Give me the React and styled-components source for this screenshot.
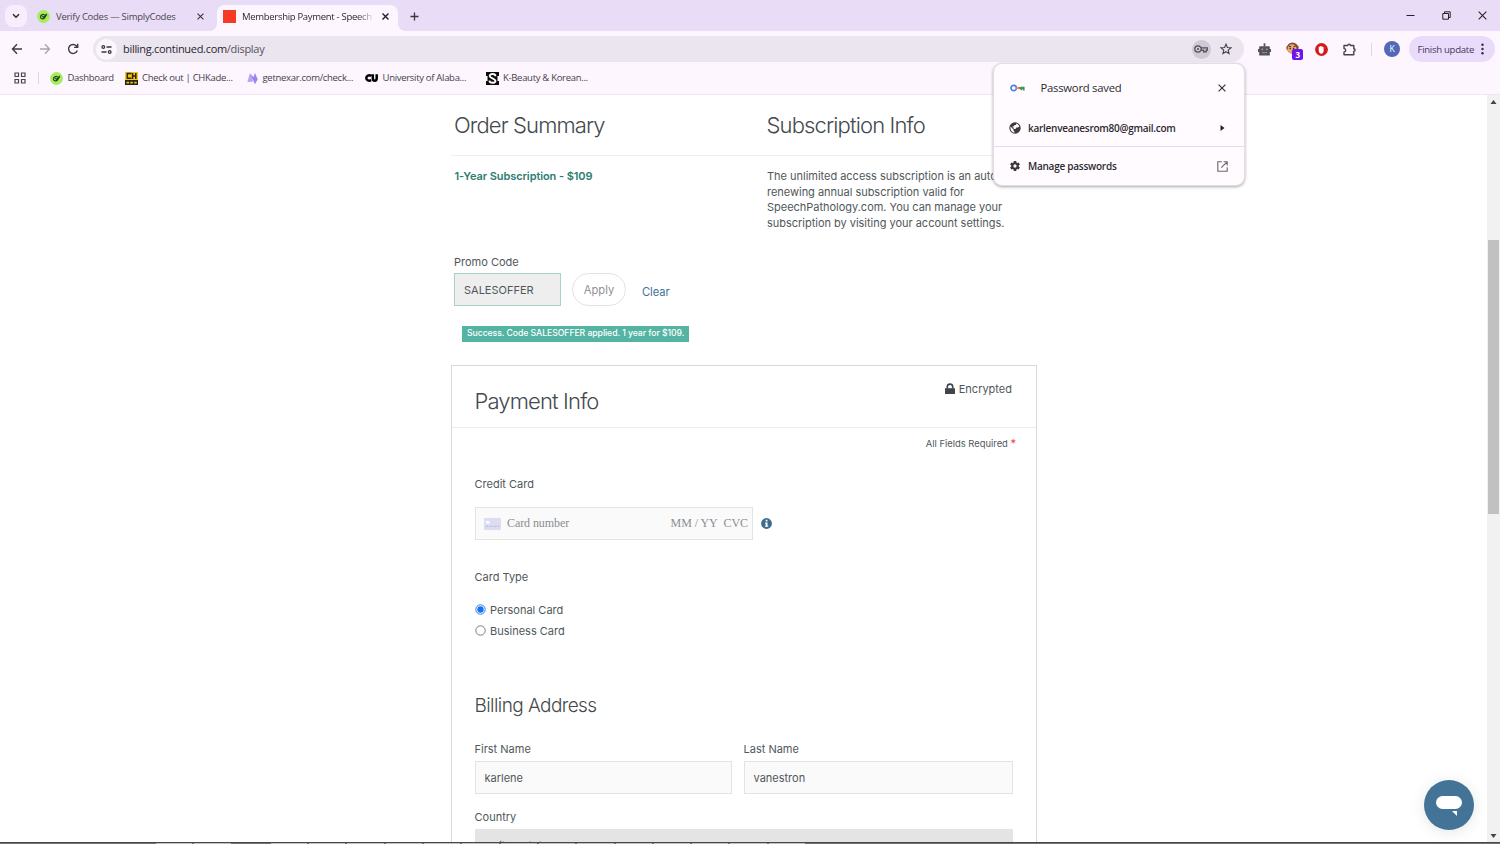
import React from 'react';
import styled, { createGlobalStyle, css } from 'styled-components';

const Global = createGlobalStyle`
  *, *::before, *::after { box-sizing: border-box; }
  html, body { margin: 0; padding: 0; overflow: hidden; background: #fff; }
  svg { display: block; flex: none; }
`;

const Screen = styled.div`
  position: relative;
  display: flex;
  flex-direction: column;
  width: 1500px;
  height: 844px;
  overflow: hidden;
  background: #fff;
  color: #50575b;
  font-family: Inter, "Liberation Sans", sans-serif;
`;

const chromeFont = css`
  font-family: "Open Sans", "Noto Sans", sans-serif;
`;

/* ---------- browser chrome ---------- */

const TabStrip = styled.div`
  ${chromeFont}
  display: flex;
  align-items: flex-end;
  height: 31px;
  background: #e8dcf6;
  font-size: 9.5px;
  color: #47434d;
`;

const TabSearch = styled.div`
  display: grid;
  place-items: center;
  width: 22px;
  height: 22px;
  margin: 0 0 4px 5px;
  border-radius: 8px;
  background: #f7eefc;
`;

const Tab = styled.div`
  position: relative;
  display: flex;
  align-items: center;
  width: ${(p) => p.$width}px;
  height: 26px;
  padding: 0 ${(p) => p.$padRight}px 3px ${(p) => p.$padLeft}px;
  gap: ${(p) => p.$gap}px;
  border-radius: 8px 8px 0 0;
  background: ${(p) => (p.$active ? '#fdf6fe' : 'transparent')};
  color: ${(p) => (p.$active ? '#2b2830' : '#4b4653')};
  ${(p) =>
    p.$active &&
    css`
      &::before,
      &::after {
        content: '';
        position: absolute;
        bottom: 0;
        width: 7px;
        height: 7px;
      }
      &::before {
        left: -7px;
        background: radial-gradient(circle at 0 0, #e8dcf6 6.5px, #fdf6fe 7px);
      }
      &::after {
        right: -7px;
        background: radial-gradient(circle at 100% 0, #e8dcf6 6.5px, #fdf6fe 7px);
      }
    `}
`;

const TabTitle = styled.span`
  flex: 1;
  white-space: nowrap;
  line-height: 16px;
  letter-spacing: ${(p) => p.$track || 0}px;
  ${(p) => p.$fade && 'mask-image: linear-gradient(90deg, #000 86%, rgba(0,0,0,.15) 97%);'}
`;

const RedFavicon = styled.span`
  width: 13px;
  height: 13px;
  background: #f63a26;
`;

const NewTab = styled.div`
  display: grid;
  place-items: center;
  width: 16px;
  height: 16px;
  margin: 0 0 7px 8px;
`;

const WindowControls = styled.div`
  display: flex;
  align-items: center;
  gap: 27px;
  margin: 0 13.5px 11px auto;
`;

const Toolbar = styled.div`
  ${chromeFont}
  display: flex;
  align-items: center;
  height: 35px;
  padding: 1px 5px 0 11px;
  background: #fdf6fe;
`;

const NavButtons = styled.div`
  display: flex;
  align-items: center;
  gap: 16px;
  margin-right: 14px;
`;

const AddressBar = styled.div`
  display: flex;
  align-items: center;
  width: 1151px;
  height: 26px;
  padding: 0 12px 0 3px;
  border-radius: 13px;
  background: #ebe5f0;
  font-size: 11px;
  color: #56525b;
`;

const SiteInfo = styled.span`
  display: grid;
  place-items: center;
  width: 21px;
  height: 21px;
  border-radius: 50%;
  background: #fbf5fd;
`;

const Url = styled.span`
  flex: 1;
  margin-left: 6px;
  letter-spacing: ${(p) => p.$track}px;
  line-height: 16px;
  b { font-weight: 400; color: #29262d; }
`;

const KeyBadge = styled.span`
  display: grid;
  place-items: center;
  width: 19px;
  height: 19px;
  margin-right: 9.5px;
  border-radius: 50%;
  background: #cfc9d6;
`;

const Extensions = styled.div`
  display: flex;
  align-items: center;
  gap: 15.3px;
  margin-left: 14px;
`;

const MonkeySlot = styled.span`
  position: relative;
  width: 13px;
  height: 15px;
`;

const CountBadge = styled.span`
  position: absolute;
  left: 6px;
  top: 7px;
  width: 11px;
  height: 11px;
  border-radius: 2px;
  background: #7012ea;
  color: #fff;
  font-size: 8px;
  font-weight: 700;
  line-height: 11px;
  text-align: center;
`;

const Separator = styled.span`
  width: 1px;
  height: 13px;
  background: #e3d3f3;
`;

const Avatar = styled.span`
  display: grid;
  place-items: center;
  width: 16px;
  height: 16px;
  margin-left: -3.5px;
  border-radius: 50%;
  background: #5468b8;
  color: #fff;
  font-size: 8.5px;
  line-height: 16px;
`;

const UpdateButton = styled.div`
  display: flex;
  align-items: center;
  justify-content: space-between;
  height: 26px;
  width: 86px;
  margin-left: auto;
  padding: 0 11px 0 8.5px;
  border-radius: 13px;
  background: #e9dcfb;
  color: #47385f;
  font-size: 9.6px;
  white-space: nowrap;
`;

const Tracked = styled.span`
  letter-spacing: ${(p) => p.$track}px;
`;

const BookmarkBar = styled.div`
  ${chromeFont}
  display: flex;
  align-items: center;
  height: 29px;
  padding: 0 0 4px 14px;
  background: #fdf6fe;
  border-bottom: 1px solid #efe4f3;
  font-size: 9.5px;
  color: #45414a;
`;

const Bookmark = styled.div`
  display: flex;
  align-items: center;
  gap: ${(p) => p.$gap || 5}px;
  width: ${(p) => p.$width}px;
  white-space: nowrap;
  line-height: 14px;
`;

const BarSeparator = styled(Separator)`
  margin: 0 11.5px;
  height: 12px;
`;

/* ---------- saved password bubble ---------- */

const Bubble = styled.div`
  ${chromeFont}
  position: absolute;
  left: 993px;
  top: 63px;
  width: 252px;
  height: 123px;
  display: flex;
  flex-direction: column;
  border-radius: 9px;
  border: 1px solid #e4dde4;
  background: #fffbff;
  box-shadow: 0 1px 3px rgba(70, 60, 60, 0.45);
  color: #2c2a30;
`;

const BubbleRow = styled.div`
  display: flex;
  align-items: center;
  height: ${(p) => p.$height}px;
  padding: ${(p) => p.$pad};
  gap: ${(p) => p.$gap}px;
  border-top: ${(p) => (p.$line ? '1px solid #e5daf1' : '0')};
  font-size: ${(p) => p.$size}px;
  font-weight: ${(p) => p.$weight || 400};
  & > :last-child { margin-left: auto; }
`;

/* ---------- page ---------- */

const Viewport = styled.div`
  display: flex;
  height: 747px;
  overflow: hidden;
`;

const Page = styled.main`
  flex: 1;
  padding-left: 451px;
`;

const Column = styled.div`
  width: 586px;
`;

const Columns = styled.div`
  display: grid;
  grid-template-columns: 312.5px 1fr;
  height: 155px;
`;

const SectionTitle = styled.h2`
  height: 61px;
  margin: 0;
  padding: 14px 0 0 3px;
  border-bottom: 1px solid #efefef;
  font-size: 22px;
  font-weight: 300;
  line-height: 33px;
  letter-spacing: ${(p) => p.$track}px;
  color: #43494d;
`;

const SectionText = styled.p`
  margin: 13px 0 0 3.5px;
  font-size: 11px;
  line-height: 15.7px;
  letter-spacing: ${(p) => p.$track || 0}px;
  font-weight: ${(p) => (p.$strong ? 600 : 400)};
  color: ${(p) => (p.$strong ? '#2b7d71' : '#50575b')};
  white-space: nowrap;
`;

const Label = styled.div`
  font-size: 11px;
  line-height: 16px;
`;

const CardTypeLabel = styled(Label)`
  margin-top: 29px;
`;

const CountryLabel = styled(Label)`
  margin-top: 15px;
`;

const Promo = styled.section`
  padding: 4px 0 0 3px;
`;

const PromoRow = styled.div`
  display: flex;
  align-items: center;
  height: 34px;
  margin-top: 2px;
`;

const Field = styled.div`
  display: flex;
  align-items: center;
  width: ${(p) => p.$width || 'auto'};
  height: 33px;
  padding: ${(p) => (p.$applied ? '1px' : '0')} 9px 0;
  border: 1px solid ${(p) => (p.$applied ? '#a5d3c8' : '#e3e3e3')};
  background: ${(p) => (p.$applied ? '#eeeeee' : '#fafafa')};
  font-size: 11px;
`;

const ApplyButton = styled.div`
  width: 54px;
  height: 33px;
  margin-left: 11px;
  border: 1px solid #e2e2e2;
  border-radius: 17px;
  font-size: 11.2px;
  line-height: 32px;
  text-align: center;
  color: #8f9294;
`;

const ClearLink = styled.a`
  margin: 5px 0 0 16px;
  font-size: 11.2px;
  letter-spacing: -0.05px;
  color: #42749b;
`;

const Success = styled.div`
  width: 227px;
  height: 16px;
  margin: 20px 0 0 8px;
  padding-left: 5px;
  background: #54b4a2;
  color: #fff;
  font-size: 8.7px;
  font-weight: 500;
  line-height: 15px;
  letter-spacing: ${(p) => p.$track}px;
  white-space: nowrap;
`;

const Card = styled.section`
  height: 520px;
  margin-top: 23px;
  border: 1px solid #d9d9d9;
`;

const CardHeader = styled.header`
  display: flex;
  justify-content: space-between;
  height: 62px;
  padding: 0 24px 0 22.5px;
  border-bottom: 1px solid #efefef;
`;

const CardTitle = styled.h2`
  margin: 19px 0 0;
  font-size: 22px;
  font-weight: 300;
  line-height: 33px;
  letter-spacing: ${(p) => p.$track}px;
  color: #43494d;
`;

const Encrypted = styled.div`
  display: flex;
  align-items: center;
  gap: 4px;
  height: 16px;
  margin-top: 15px;
  font-size: 11px;
  line-height: 16px;
`;

const Required = styled.div`
  height: 16px;
  margin: 7px 20px 0 0;
  font-size: 9.4px;
  line-height: 16px;
  text-align: right;
  i { font-style: normal; color: #ee4036; font-size: 11px; }
`;

const CardBody = styled.div`
  padding: 25px 22.5px 0;
`;

const CardNumberRow = styled.div`
  display: flex;
  align-items: center;
  gap: 8px;
  margin-top: 15px;
`;

const CardInput = styled.div`
  display: flex;
  align-items: center;
  width: 278.5px;
  height: 33px;
  padding: 0 4px 0 8px;
  border: 1px solid #e3e3e3;
  background: #fafafa;
  font-family: "Liberation Serif", serif;
  font-size: 12px;
  letter-spacing: -0.08px;
  color: #8b8e90;
`;

const CardPlaceholder = styled.span`
  margin-left: ${(p) => p.$left};
`;

const RadioRow = styled.div`
  display: flex;
  align-items: center;
  gap: 4.5px;
  height: 21px;
`;

const RadioGroup = styled.div`
  margin-top: 14px;
`;

const SubTitle = styled.h3`
  margin: 51px 0 0;
  font-size: 19px;
  font-weight: 300;
  line-height: 28px;
  letter-spacing: ${(p) => p.$track}px;
  color: #43494d;
`;

const NameGrid = styled.div`
  display: grid;
  grid-template-columns: 257.5px 269px;
  column-gap: 11.5px;
  row-gap: 4px;
  margin-top: 21px;
`;

const CountrySelect = styled.div`
  height: 33px;
  width: 538px;
  margin-top: 4px;
  padding-left: 10px;
  background: #e4e4e4;
  font-size: 11px;
  line-height: 34px;
`;

const Scrollbar = styled.div`
  display: flex;
  flex-direction: column;
  align-items: center;
  justify-content: space-between;
  width: 13px;
  padding: 5px 0 4px;
  background: #f1f1f1;
`;

const ScrollThumb = styled.div`
  width: 11px;
  height: 274px;
  margin-bottom: 184px;
  background: #c1c1c1;
`;

const ChatButton = styled.div`
  position: absolute;
  left: 1424px;
  top: 780px;
  display: grid;
  place-items: center;
  width: 50px;
  height: 50px;
  border-radius: 50%;
  background: #437396;
  box-shadow: 0 2px 14px rgba(30, 60, 60, 0.13);
`;

const Taskbar = styled.div`
  display: flex;
  gap: 2px;
  height: 2px;
  padding-left: 156px;
  border-top: 1px solid #47464a;
  background: #757274;
`;

const TaskItem = styled.span`
  width: 36.3px;
  height: 1px;
  background: ${(p) => (p.$empty ? '#757274' : '#c5bec3')};
`;

/* ---------- drawings ---------- */

const Svg = ({ w, h = w, box, children, ...rest }) => (
  <svg width={w} height={h} viewBox={box || `0 0 ${w} ${h}`} fill="none" {...rest}>
    {children}
  </svg>
);

const Cross = ({ size = 7, color = '#333', weight = 1.2 }) => (
  <Svg w={size} box="0 0 8 8" stroke={color} strokeWidth={weight}>
    <path d="M.6.6l6.8 6.8M7.4.6L.6 7.4" />
  </Svg>
);

const CodesIcon = () => (
  <Svg w={13}>
    <circle cx="6.5" cy="6.5" r="6.4" fill="#a6ec5c" />
    <path d="M7.600 4.700C5.700 3.900 3.400 5.200 3.500 7s2.500 2.500 3.800 1.300c1-.9 1.300-2.500 2.500-4.200M5.200 6.300l1.300.9 3.300-3.200" stroke="#26451b" strokeWidth="1.200" />
  </Svg>
);

const ChIcon = () => (
  <Svg w={13}>
    <path d="M0 0h13v13H0z" fill="#2b2410" />
    <path d="M0 0h13v8H0z" fill="#f3c51b" />
    <path d="M5.700 2.300V1.500H2.300v4.800h3.400v-.9M7.600.9v6M10.800.9v6M7.600 3.900h3.200" stroke="#2b2410" strokeWidth="1.500" />
    <path d="M1.500 10.600h2.500M5.300 10.600h2.500M9.200 10.600h2.500" stroke="#f3c51b" strokeWidth="1.800" />
  </Svg>
);

const NexarIcon = () => (
  <Svg w={11} h={13}>
    <path d="M.4 10L2.800 1.500l2.900 5v3.200z" fill="#b7a5ef" />
    <path d="M2.800 1l3.700 4.200L8 1l2.700 6.200L8 12.200z" fill="#9a83ee" />
  </Svg>
);

const CuIcon = () => (
  <Svg w={13} h={8} stroke="#000" strokeWidth="2.500">
    <path d="M6.200 1.800C3.800.7 1.300 1.700 1.300 4s2.500 3.300 4.900 2.200M7.800.2v4c0 3.300 3.900 3.300 3.900 0v-4" />
  </Svg>
);

const SIcon = () => (
  <Svg w={13}>
    <path d="M0 0h13v13H0z" fill="#0c0c0c" />
    <path d="M0 4h1.500v5H0zM11.500 4H13v5h-1.500z" fill="#fff" />
    <path d="M9.500 4.300C9.300 1.300 3.600 1.400 3.700 4c.1 2.300 5.800 2.500 5.800 5 0 2.500-5.900 2.400-6.100-.4" stroke="#fff" strokeWidth="1.900" />
  </Svg>
);

const KeyIcon = () => (
  <Svg w={14} h={8} stroke="#504b56" strokeWidth="1.200">
    <circle cx="4" cy="4" r="3.200" />
    <circle cx="4" cy="4" r="1" fill="#504b56" stroke="none" />
    <path d="M7 2.900h6.300v2.300h-1.100v1.700h-2.600V5.200H7" />
  </Svg>
);

const StarIcon = () => (
  <Svg w={12} box="0 0 24 24" stroke="#48434e" strokeWidth="2.300" strokeLinejoin="miter">
    <path d="M12 2.500l2.800 6.500 7.100.6-5.400 4.700 1.600 6.900L12 17.500l-6.100 3.700 1.600-6.900-5.400-4.700 7.100-.6z" />
  </Svg>
);

const RobotIcon = () => (
  <Svg w={13}>
    <path d="M5.600.3h1.800v3.200H5.600z" fill="#555" />
    <path d="M2 3.200h9c.5 0 .8.400.8.800v2H13v3h-1.200v3.500H1.200V9H0V6h1.200V4c0-.4.300-.8.800-.8z" fill="#545356" />
    <circle cx="4.300" cy="6.300" r=".9" fill="#a7a5a9" />
    <circle cx="8.700" cy="6.300" r=".9" fill="#a7a5a9" />
    <path d="M4 9.700h5" stroke="#969499" />
  </Svg>
);

const MonkeyIcon = () => (
  <Svg w={13}>
    <circle cx="2" cy="6" r="2" fill="#b5714b" />
    <circle cx="11" cy="5.500" r="2" fill="#b5714b" />
    <circle cx="6.500" cy="6" r="5.600" fill="#7b4a34" />
    <ellipse cx="6" cy="7" rx="4.500" ry="4.700" fill="#e9a873" />
    <path d="M3 4.300l2 .5M7.500 4.800l2-.7" stroke="#4b281c" />
    <circle cx="4.300" cy="6.500" r=".8" fill="#3a2018" />
    <circle cx="7.600" cy="6.500" r=".8" fill="#3a2018" />
  </Svg>
);

const BlockIcon = () => (
  <Svg w={13}>
    <circle cx="6.500" cy="6.500" r="6.400" fill="#d51a1b" />
    <path d="M3.700 6.800V4.200c0-.8 1-.8 1.100 0 .1-1.700 1.200-1.700 1.300-.3.200-1.200 1.200-1.100 1.300.2.300-.7 1.200-.5 1.200.3l.1 2.800c0 2.300-1 3.500-2.500 3.500S3.700 9.300 3.700 6.800z" fill="#fff" />
  </Svg>
);

const PuzzleIcon = () => (
  <Svg w={13} stroke="#47424b" strokeWidth="1.400" strokeLinejoin="round">
    <path d="M1 2.500h3.800c0-1.800 2.600-1.800 2.600 0h3.400v3.300c1.700 0 1.700 2.500 0 2.500v3.500H1V8.900c2.300 0 2.300-3.300 0-3.300z" />
  </Svg>
);

const GoogleKey = () => (
  <Svg w={15} h={8}>
    <circle cx="3.700" cy="4" r="2.700" stroke="#4c82e8" strokeWidth="1.700" />
    <path d="M6.500 3h2.500v2H6.500z" fill="#e8a23b" />
    <path d="M8.500 3h2.500v2H8.500z" fill="#e25b45" />
    <path d="M10.500 2.800h4.100v3.800h-1.700V5.200h-.8v1h-1.600z" fill="#359a50" />
  </Svg>
);

const Globe = () => (
  <Svg w={12}>
    <circle cx="6" cy="6" r="5.700" fill="#3c3a3f" />
    <path d="M1.500 4.600l3 3v1.200l1 .9v1c-2.700-.4-4.500-2.800-4-6.100zM7.500 1.500C8.900 2 10 3.100 10.400 4.600l-1.600 1H7.300L6.500 7H4.700V5.500h-1V4.200h1.600V3h1.500z" fill="#fffbff" />
  </Svg>
);

const Gear = () => (
  <Svg w={12} box="0 0 24 24">
    <path fill="#39373c" d="M19.400 13a7.500 7.500 0 000-2l2.400-1.800-2.500-4.300-2.800 1.200a7.500 7.500 0 00-1.600-1L14.500 2h-5l-.4 3.100a7.500 7.500 0 00-1.600 1L4.700 4.900 2.200 9.200 4.600 11a7.500 7.500 0 000 2l-2.400 1.800 2.500 4.300 2.800-1.200a7.500 7.500 0 001.600 1l.4 3.100h5l.4-3.100a7.500 7.500 0 001.600-1l2.800 1.200 2.500-4.300zM12 15.300a3.300 3.300 0 110-6.600 3.300 3.300 0 010 6.600z" />
  </Svg>
);

const OpenIcon = () => (
  <Svg w={11} stroke="#6a666d" strokeWidth="1.100">
    <path d="M4.800.8H.8v9.400h9.400v-4M6.600.8h3.600v3.600M10.200.8L4.300 6.700" />
  </Svg>
);

const Radio = ({ on }) => (
  <Svg w={11}>
    <circle cx="5.500" cy="5.500" r="4.700" fill="#fff" stroke={on ? '#2a7cf0' : '#7c7c7c'} strokeWidth="1" />
    {on && <circle cx="5.500" cy="5.500" r="3.200" fill="#1673ee" />}
  </Svg>
);

const bookmarks = [
  { icon: <CodesIcon />, text: 'Dashboard', width: 74.5, gap: 4.500 },
  { icon: <ChIcon />, text: 'Check out | CHKade...', width: 122, gap: 4.500 },
  { icon: <NexarIcon />, text: 'getnexar.com/check...', width: 118.5, gap: 5 },
  { icon: <CuIcon />, text: 'University of Alaba...', width: 120.5, gap: 4.500 },
  { icon: <SIcon />, text: 'K-Beauty & Korean...', width: 120, gap: 4.500 },
];

const taskItems = Array.from({ length: 17 }, (_, i) => i === 2);

export default function App() {
  return (
    <Screen>
      <Global />
      <TabStrip>
        <TabSearch>
          <Svg w={8} h={6} stroke="#2e2a33" strokeWidth="1.500"><path d="M1 1.300l3 3 3-3" /></Svg>
        </TabSearch>
        <Tab $width={190} $padLeft={10} $padRight={13.500} $gap={6}>
          <CodesIcon />
          <TabTitle $track={-0.26}>Verify Codes — SimplyCodes</TabTitle>
          <Cross />
        </Tab>
        <Tab $active $width={181} $padLeft={6} $padRight={9} $gap={6}>
          <RedFavicon />
          <TabTitle $fade $track={-0.3}>Membership Payment - Speech</TabTitle>
          <Cross color="#1c1a1f" weight={1.500} />
        </Tab>
        <NewTab><Svg w={9} stroke="#3b3741" strokeWidth="1.300"><path d="M4.500.5v8M.5 4.500h8" /></Svg></NewTab>
        <WindowControls>
          <Svg w={9} stroke="#222"><path d="M.5 4.500h8" /></Svg>
          <Svg w={9} stroke="#222"><path d="M.8 2.500h5.700v5.700H.8zM2.500 2.500V.8h5.700v5.700H6.500" /></Svg>
          <Cross size={9} color="#222" weight={0.900} />
        </WindowControls>
      </TabStrip>

      <Toolbar>
        <NavButtons>
          <Svg w={12} stroke="#3f3a45" strokeWidth="1.400"><path d="M11 6H1.500M6 1.300L1.500 6 6 10.700" /></Svg>
          <Svg w={12} stroke="#aaa3b0" strokeWidth="1.300"><path d="M1 6h9.500M6 1.300L10.500 6 6 10.700" /></Svg>
          <Svg w={12} stroke="#3f3a45" strokeWidth="1.400"><path d="M10.300 7.500A4.500 4.500 0 119.500 3L10.500 4.200M10.700.8v3.600H7.100" /></Svg>
        </NavButtons>
        <AddressBar>
          <SiteInfo>
            <Svg w={11} h={9} stroke="#3b3741" strokeWidth="1.300">
              <circle cx="2.300" cy="2" r="1.300" /><path d="M5.500 2h5M.5 7h5" /><circle cx="8.700" cy="7" r="1.300" />
            </Svg>
          </SiteInfo>
          <Url $track={-0.3}><b>billing.continued.com</b>/display</Url>
          <KeyBadge><KeyIcon /></KeyBadge>
          <StarIcon />
        </AddressBar>
        <Extensions>
          <RobotIcon />
          <MonkeySlot><MonkeyIcon /><CountBadge>3</CountBadge></MonkeySlot>
          <BlockIcon />
          <PuzzleIcon />
          <Separator />
          <Avatar>K</Avatar>
        </Extensions>
        <UpdateButton>
          <Tracked $track={-0.3}>Finish update</Tracked>
          <Svg w={3} h={12}><circle cx="1.500" cy="1.700" r="1.200" fill="#33283f" /><circle cx="1.500" cy="6" r="1.200" fill="#33283f" /><circle cx="1.500" cy="10.300" r="1.200" fill="#33283f" /></Svg>
        </UpdateButton>
      </Toolbar>

      <BookmarkBar>
        <Svg w={12} stroke="#4a4550" strokeWidth="1.200"><path d="M1 1h3.500v3.500H1zM7.500 1H11v3.500H7.500zM1 7.500h3.500V11H1zM7.500 7.500H11V11H7.500z" /></Svg>
        <BarSeparator />
        {bookmarks.map((b) => (
          <Bookmark key={b.text} $width={b.width} $gap={b.gap}>
            {b.icon}
            <Tracked $track={-0.3}>{b.text}</Tracked>
          </Bookmark>
        ))}
      </BookmarkBar>

      <Viewport>
        <Page>
          <Column>
            <Columns>
              <div>
                <SectionTitle $track={-0.88}>Order Summary</SectionTitle>
                <SectionText $strong $track={-0.09}>1-Year Subscription - $109</SectionText>
              </div>
              <div>
                <SectionTitle $track={-0.85}>Subscription Info</SectionTitle>
                <SectionText $track={-0.02}>
                  The unlimited access subscription is an auto-<br />
                  renewing annual subscription valid for<br />
                  SpeechPathology.com. You can manage your<br />
                  subscription by visiting your account settings.
                </SectionText>
              </div>
            </Columns>
            <Promo>
              <Label>Promo Code</Label>
              <PromoRow>
                <Field $applied $width="107px">SALESOFFER</Field>
                <ApplyButton>Apply</ApplyButton>
                <ClearLink>Clear</ClearLink>
              </PromoRow>
              <Success $track={-0.07}>Success. Code SALESOFFER applied. 1 year for $109.</Success>
            </Promo>
            <Card>
              <CardHeader>
                <CardTitle $track={-0.85}>Payment Info</CardTitle>
                <Encrypted>
                  <Svg w={10} h={12}><path d="M0 5.200h10V11H0z" fill="#3f4549" /><path d="M2.300 5.500V3.700C2.300.2 7.700.2 7.700 3.700v1.800" stroke="#3f4549" strokeWidth="1.600" /></Svg>
                  Encrypted
                </Encrypted>
              </CardHeader>
              <Required>All Fields Required <i>*</i></Required>
              <CardBody>
                <Label>Credit Card</Label>
                <CardNumberRow>
                  <CardInput>
                    <Svg w={17} h={12}><rect width="17" height="12" rx="1" fill="#dddcf5" /><path d="M2 3h3.500v2.500H2z" fill="#fff" /><path d="M1.500 8.300h14" stroke="#bdbbe0" strokeDasharray="3 1" /></Svg>
                    <CardPlaceholder $left="6.5px">Card number</CardPlaceholder>
                    <CardPlaceholder $left="auto">MM / YY</CardPlaceholder>
                    <CardPlaceholder $left="6px">CVC</CardPlaceholder>
                  </CardInput>
                  <Svg w={11}><circle cx="5.500" cy="5.500" r="5.400" fill="#3c6b8d" /><path d="M4.700 1.800h1.800v1.600H4.700zM3.900 4.400h2.600v3.400h.8v1H3.900v-1h.8V5.400h-.8z" fill="#fff" /></Svg>
                </CardNumberRow>
                <CardTypeLabel>Card Type</CardTypeLabel>
                <RadioGroup>
                  <RadioRow><Radio on /><Label>Personal Card</Label></RadioRow>
                  <RadioRow><Radio /><Label>Business Card</Label></RadioRow>
                </RadioGroup>
                <SubTitle $track={-0.58}>Billing Address</SubTitle>
                <NameGrid>
                  <Label>First Name</Label>
                  <Label>Last Name</Label>
                  <Field>karlene</Field>
                  <Field>vanestron</Field>
                </NameGrid>
                <CountryLabel>Country</CountryLabel>
                <CountrySelect>United States</CountrySelect>
              </CardBody>
            </Card>
          </Column>
        </Page>
        <Scrollbar>
          <Svg w={7} h={4}><path d="M3.500 0L6.500 4h-6z" fill="#444" /></Svg>
          <ScrollThumb />
          <Svg w={7} h={4}><path d="M3.500 4l3-4h-6z" fill="#444" /></Svg>
        </Scrollbar>
      </Viewport>

      <Taskbar>{taskItems.map((empty, i) => <TaskItem key={i} $empty={empty} />)}</Taskbar>

      <ChatButton>
        <Svg w={26} h={22}>
          <rect x="0" y="2" width="26" height="13" rx="6.500" fill="#fff" />
          <path d="M16 17h5v5z" fill="#fff" />
        </Svg>
      </ChatButton>

      <Bubble>
        <BubbleRow $height={47} $pad="0 18px 0 16px" $gap={15.500} $size={11.300}>
          <GoogleKey />
          <Tracked $track={-0.25}>Password saved</Tracked>
          <Cross size={8} />
        </BubbleRow>
        <BubbleRow $height={35} $pad="0 19px 2px 15px" $gap={7} $size={10} $weight={600}>
          <Globe />
          <Tracked $track={-0.27}>karlenveanesrom80@gmail.com</Tracked>
          <Svg w={5} h={6}><path d="M.5 0L4.500 3l-4 3z" fill="#222" /></Svg>
        </BubbleRow>
        <BubbleRow $line $height={39} $pad="0 16.5px 0 15px" $gap={7} $size={10} $weight={600}>
          <Gear />
          <Tracked $track={-0.25}>Manage passwords</Tracked>
          <OpenIcon />
        </BubbleRow>
      </Bubble>
    </Screen>
  );
}
